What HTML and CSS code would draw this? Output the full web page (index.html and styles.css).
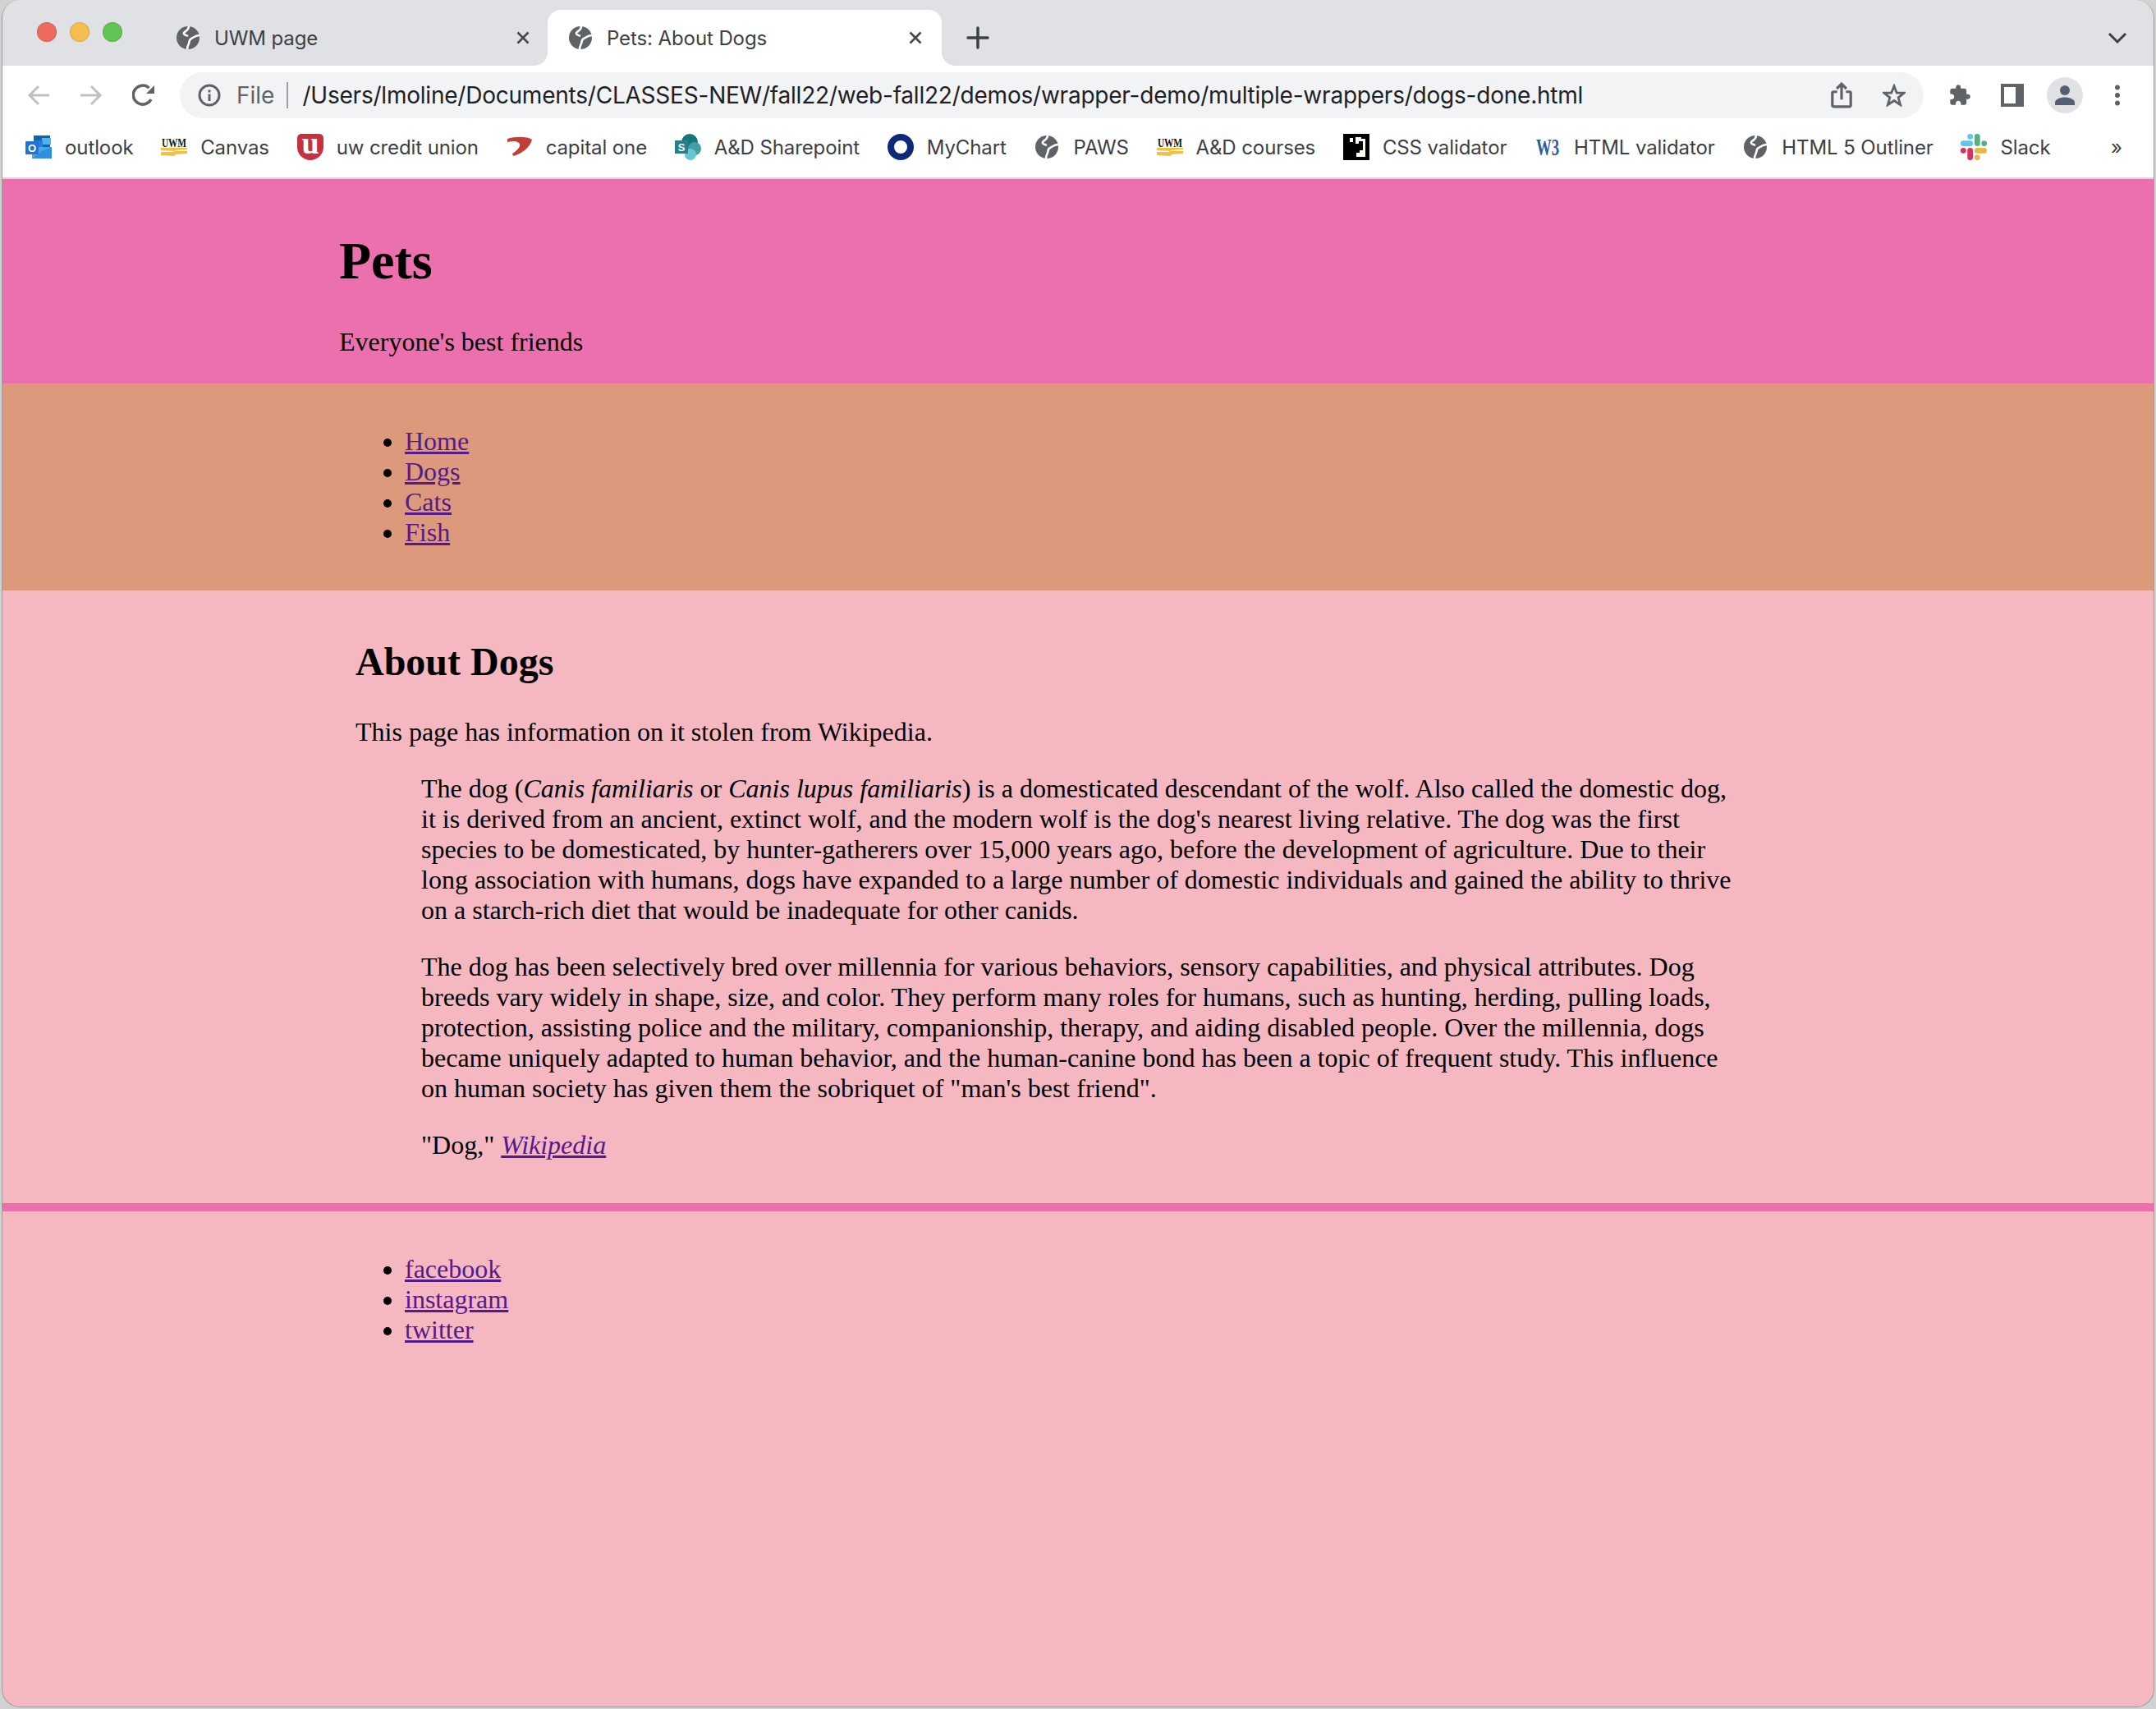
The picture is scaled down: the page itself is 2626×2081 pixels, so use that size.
FILE: index.html
```html
<!DOCTYPE html>
<html lang="en">
<head>
    <meta charset="UTF-8">
    <meta name="viewport" content="width=device-width, initial-scale=1.0">
    <title>Pets: About Dogs</title>
    <link rel="stylesheet" href="styles.css">
</head>
<body>
    <svg class="defs" width="0" height="0">
        <symbol id="globe" viewBox="0 0 28 28">
            <circle cx="14" cy="14" r="14" fill="#5f6368"/>
            <path d="M15 0C15 5 10 6 9 8C8 10 12 11 14 12" fill="none" stroke="#fff" stroke-width="2.600"/>
            <path d="M28 11C23 11 20 14 18 15C15 16 16 19 15 21C14 23 13 25 13 28" fill="none" stroke="#fff" stroke-width="2.600"/>
        </symbol>
        <symbol id="uwm-bars" viewBox="0 0 32 12">
            <path d="M0 1H32V3L18 4L16 5L0 4Z" fill="#f2c144"/>
            <path d="M0 6H14L16 5H32V8L18 9L16 11L0 10Z" fill="#f2c144"/>
        </symbol>
    </svg>

    <div class="window">
        <div class="tabstrip">
            <div class="lights">
                <span class="light red"></span>
                <span class="light yellow"></span>
                <span class="light green"></span>
            </div>
            <div class="tab">
                <svg class="tab-icon"><use href="#globe"/></svg>
                <span class="tab-title">UWM page</span>
                <svg class="tab-close" viewBox="0 0 20 20"><path d="M3.500 3.500L16.500 16.500M16.500 3.500L3.500 16.500"/></svg>
            </div>
            <div class="tab active">
                <svg class="tab-icon"><use href="#globe"/></svg>
                <span class="tab-title">Pets: About Dogs</span>
                <svg class="tab-close" viewBox="0 0 20 20"><path d="M3.500 3.500L16.500 16.500M16.500 3.500L3.500 16.500"/></svg>
            </div>
            <svg class="new-tab" viewBox="0 0 28 28"><path d="M14 2V26M2 14H26"/></svg>
            <svg class="tab-search" viewBox="0 0 28 28"><path d="M4 9L14 19L24 9"/></svg>
        </div>

        <div class="toolbar">
            <span class="tool">
                <svg class="icon" viewBox="0 0 28 28"><path class="line off" d="M27 14H3M14 3L3 14L14 25"/></svg>
            </span>
            <span class="tool">
                <svg class="icon" viewBox="0 0 28 28"><path class="line off" d="M1 14H25M14 3L25 14L14 25"/></svg>
            </span>
            <span class="tool">
                <svg class="icon" viewBox="0 0 28 28">
                    <path class="line" d="M23 19A11.500 11.500 0 1 1 20.500 5"/>
                    <path class="solid" d="M27 2V12H17Z"/>
                </svg>
            </span>
            <div class="omnibox">
                <svg class="icon" viewBox="0 0 28 28">
                    <circle class="line thin" cx="14" cy="14" r="12"/>
                    <path class="solid" d="M12.500 12.500H15.500V21H12.500ZM12.500 7.500H15.500V10.500H12.500Z"/>
                </svg>
                <span class="scheme">File</span>
                <span class="divider"></span>
                <span class="url">/Users/lmoline/Documents/CLASSES-NEW/fall22/web-fall22/demos/wrapper-demo/multiple-wrappers/dogs-done.html</span>
                <span class="tool">
                    <svg class="icon share" viewBox="0 0 24 30">
                        <path class="line thin" d="M7 11H3A1.500 1.500 0 0 0 1.500 12.500V26.500A1.500 1.500 0 0 0 3 28H21A1.500 1.500 0 0 0 22.500 26.500V12.500A1.500 1.500 0 0 0 21 11H17"/>
                        <path class="line thin" d="M12 20V2M6.500 7.500L12 2L17.500 7.500"/>
                    </svg>
                </span>
                <span class="tool">
                    <svg class="icon" viewBox="0 0 30 30"><path class="line thin" d="M15 3L18.500 12H28L20.500 18L23.200 27.500L15 22L6.800 27.500L9.500 18L2 12H11.500Z"/></svg>
                </span>
            </div>
            <span class="tool">
                <svg class="icon" viewBox="0 0 24 24"><path class="solid" d="M20.500 11H19V7c0-1.100-.9-2-2-2h-4V3.500C13 2.120 11.880 1 10.500 1S8 2.120 8 3.500V5H4c-1.100 0-1.990.9-1.990 2v3.800H3.500c1.490 0 2.700 1.210 2.700 2.700s-1.210 2.700-2.700 2.700H2V20c0 1.100.9 2 2 2h3.800v-1.500c0-1.490 1.210-2.700 2.700-2.700 1.490 0 2.700 1.210 2.700 2.700V22H17c1.100 0 2-.9 2-2v-4h1.500c1.380 0 2.500-1.120 2.500-2.500S21.880 11 20.500 11z"/></svg>
            </span>
            <span class="tool">
                <span class="side-panel"></span>
            </span>
            <span class="tool">
                <svg class="avatar" viewBox="0 0 44 44">
                    <circle cx="22" cy="22" r="22" fill="#dfe1e5"/>
                    <circle cx="22" cy="16" r="6" fill="#565e71"/>
                    <path d="M10 34V31C10 27 16 24.500 22 24.500C28 24.500 34 27 34 31V34Z" fill="#565e71"/>
                </svg>
            </span>
            <span class="tool">
                <svg class="icon" viewBox="0 0 28 28">
                    <circle class="solid" cx="14" cy="4.500" r="3"/>
                    <circle class="solid" cx="14" cy="14" r="3"/>
                    <circle class="solid" cx="14" cy="23.500" r="3"/>
                </svg>
            </span>
        </div>

        <div class="bookmarks">
            <a class="bookmark">
                <svg class="fav" viewBox="0 0 32 32">
                    <rect x="10" y="2" width="20" height="14" fill="#0f63b5"/>
                    <rect x="20" y="5" width="11" height="8" fill="#50b4f0"/>
                    <rect x="10" y="8" width="11" height="8" fill="#2b7cd3"/>
                    <path d="M8 16L32 16V30H8Z" fill="#4ca5e6"/>
                    <path d="M8 30L20 21L32 16V17L32 30Z" fill="#2e8ee0"/>
                    <rect x="0" y="9" width="16" height="16" rx="1" fill="#2272cf"/>
                    <text x="8" y="21.500" class="logo-sans" font-size="13" text-anchor="middle" fill="#fff">O</text>
                </svg>
                outlook
            </a>
            <a class="bookmark">
                <svg class="fav" viewBox="0 0 32 32">
                    <text x="1" y="16" class="uwm-text" textLength="30" lengthAdjust="spacingAndGlyphs">UWM</text>
                    <use href="#uwm-bars" y="16" width="32" height="12"/>
                </svg>
                Canvas
            </a>
            <a class="bookmark">
                <svg class="fav" viewBox="0 0 32 32">
                    <path d="M5 0H27A5 5 0 0 1 32 5V16A16 16 0 0 1 0 16V5A5 5 0 0 1 5 0Z" fill="#c7303e"/>
                    <text x="16" y="24" class="logo-serif" font-size="38" text-anchor="middle" fill="#fff">u</text>
                </svg>
                uw credit union
            </a>
            <a class="bookmark">
                <svg class="fav" viewBox="0 0 32 32">
                    <path d="M1 6C11 3 25 3 31 7C29 16 19 24 8 27L7 24C15 19 18 14 15 11C11 8 6 9 1 10Z" fill="#c43d36"/>
                </svg>
                capital one
            </a>
            <a class="bookmark">
                <svg class="fav" viewBox="0 0 32 32">
                    <circle cx="18" cy="10" r="10" fill="#17767a"/>
                    <circle cx="24" cy="18" r="8" fill="#459ea3"/>
                    <circle cx="19" cy="25" r="7" fill="#68c6d2"/>
                    <rect x="0" y="8" width="16" height="16" fill="#2a8087"/>
                    <text x="8" y="21" class="logo-sans" font-size="13" text-anchor="middle" fill="#fff">S</text>
                </svg>
                A&amp;D Sharepoint
            </a>
            <a class="bookmark">
                <svg class="fav" viewBox="0 0 32 32"><circle cx="16" cy="16" r="12" fill="#fff" stroke="#0d2a7a" stroke-width="8"/></svg>
                MyChart
            </a>
            <a class="bookmark">
                <span class="fav-box"><svg class="fav-globe"><use href="#globe"/></svg></span>
                PAWS
            </a>
            <a class="bookmark">
                <svg class="fav" viewBox="0 0 32 32">
                    <text x="1" y="16" class="uwm-text" textLength="30" lengthAdjust="spacingAndGlyphs">UWM</text>
                    <use href="#uwm-bars" y="16" width="32" height="12"/>
                </svg>
                A&amp;D courses
            </a>
            <a class="bookmark">
                <svg class="fav" viewBox="0 0 32 32">
                    <rect width="32" height="32" fill="#000"/>
                    <path d="M8 5H12V10H8ZM15 4H22V6H27V20H24V9H19V12H15ZM16 23H20V20H27V28H16Z" fill="#fffdf0"/>
                </svg>
                CSS validator
            </a>
            <a class="bookmark">
                <svg class="fav" viewBox="0 0 32 32">
                    <text x="16" y="26" class="logo-w3" font-size="30" text-anchor="middle" textLength="28" lengthAdjust="spacingAndGlyphs">W3</text>
                </svg>
                HTML validator
            </a>
            <a class="bookmark">
                <span class="fav-box"><svg class="fav-globe"><use href="#globe"/></svg></span>
                HTML 5 Outliner
            </a>
            <a class="bookmark">
                <svg class="fav" viewBox="0 0 32 32">
                    <rect x="0" y="8.300" width="15" height="6.700" rx="3.300" fill="#5fc6ee"/>
                    <rect x="8.300" y="0" width="6.700" height="6.700" rx="3.300" fill="#5fc6ee"/>
                    <rect x="17" y="0" width="6.700" height="15" rx="3.300" fill="#4cb582"/>
                    <rect x="25.300" y="8.300" width="6.700" height="6.700" rx="3.300" fill="#4cb582"/>
                    <rect x="17" y="17" width="15" height="6.700" rx="3.300" fill="#e9b64a"/>
                    <rect x="17" y="25.300" width="6.700" height="6.700" rx="3.300" fill="#e9b64a"/>
                    <rect x="8.300" y="17" width="6.700" height="15" rx="3.300" fill="#dc2f5c"/>
                    <rect x="0" y="17" width="6.700" height="6.700" rx="3.300" fill="#dc2f5c"/>
                </svg>
                Slack
            </a>
            <span class="more">»</span>
        </div>

        <header class="band site-header">
            <div class="wrapper">
                <h1>Pets</h1>
                <p>Everyone's best friends</p>
            </div>
        </header>

        <nav class="band site-nav">
            <div class="wrapper">
                <ul>
                    <li><a href="#home">Home</a></li>
                    <li><a href="#dogs">Dogs</a></li>
                    <li><a href="#cats">Cats</a></li>
                    <li><a href="#fish">Fish</a></li>
                </ul>
            </div>
        </nav>

        <main class="band site-main">
            <div class="wrapper">
                <h2>About Dogs</h2>
                <p>This page has information on it stolen from Wikipedia.</p>
                <blockquote>
                    <p>The dog (<em>Canis familiaris</em> or <em>Canis lupus familiaris</em>) is a domesticated descendant of the wolf. Also called the domestic dog, it is derived from an ancient, extinct wolf, and the modern wolf is the dog's nearest living relative. The dog was the first species to be domesticated, by hunter-gatherers over 15,000 years ago, before the development of agriculture. Due to their long association with humans, dogs have expanded to a large number of domestic individuals and gained the ability to thrive on a starch-rich diet that would be inadequate for other canids.</p>
                    <p>The dog has been selectively bred over millennia for various behaviors, sensory capabilities, and physical attributes. Dog breeds vary widely in shape, size, and color. They perform many roles for humans, such as hunting, herding, pulling loads, protection, assisting police and the military, companionship, therapy, and aiding disabled people. Over the millennia, dogs became uniquely adapted to human behavior, and the human-canine bond has been a topic of frequent study. This influence on human society has given them the sobriquet of "man's best friend".</p>
                    <p>"Dog," <a href="#wikipedia"><em>Wikipedia</em></a></p>
                </blockquote>
            </div>
        </main>

        <footer class="band site-footer">
            <div class="wrapper">
                <ul>
                    <li><a href="#facebook">facebook</a></li>
                    <li><a href="#instagram">instagram</a></li>
                    <li><a href="#twitter">twitter</a></li>
                </ul>
            </div>
        </footer>
    </div>
</body>
</html>
```

FILE: styles.css
```css
html, body {
    height: 100%;
}
body {
    margin: 0;
    padding: 0 2px 2px 2px;
    box-sizing: border-box;
    background-color: #d2d2d2;
    font-family: "Liberation Serif", serif;
    font-size: 32px;
    line-height: 37px;
    color: #000;
}
.defs {
    position: absolute;
}
.window {
    display: flex;
    flex-direction: column;
    height: 100%;
    box-sizing: border-box;
    background-color: #f5b7c0;
    border: 1px solid #9c9c9c;
    border-top: none;
    border-radius: 22px;
    overflow: hidden;
}

/* browser chrome */
.tabstrip {
    display: flex;
    align-items: stretch;
    height: 80px;
    box-sizing: border-box;
    padding: 12px 30px 0 42px;
    background-color: #dfe1e5;
    font-family: Inter, sans-serif;
    font-size: 24px;
    letter-spacing: -0.1px;
    color: #3c4043;
}
.lights {
    display: flex;
    gap: 16px;
    margin-top: 15px;
    margin-right: 50px;
}
.light {
    width: 24px;
    height: 24px;
    box-sizing: border-box;
    border-radius: 50%;
    border: 1px solid rgba(0, 0, 0, 0.12);
}
.light.red {
    background-color: #ee6a5f;
}
.light.yellow {
    background-color: #f6be4f;
}
.light.green {
    background-color: #61c454;
}
.tab {
    display: flex;
    align-items: center;
    width: 468px;
    box-sizing: border-box;
    padding: 0 20px 0 16px;
}
.tab.active {
    position: relative;
    width: 480px;
    padding: 0 22px 0 26px;
    background-color: #fff;
    border-radius: 16px 16px 0 0;
}
.tab.active::before,
.tab.active::after {
    content: "";
    position: absolute;
    bottom: 0;
    width: 16px;
    height: 16px;
}
.tab.active::before {
    left: -16px;
    background: radial-gradient(circle at 0 0, #dfe1e5 15.500px, #fff 16px);
}
.tab.active::after {
    right: -16px;
    background: radial-gradient(circle at 100% 0, #dfe1e5 15.500px, #fff 16px);
}
.tab-icon {
    width: 28px;
    height: 28px;
    margin-right: 18px;
    flex-shrink: 0;
}
.tab-title {
    flex: 1;
    white-space: nowrap;
}
.tab-close {
    width: 20px;
    height: 20px;
    fill: none;
    stroke: #45494d;
    stroke-width: 2.600;
}
.new-tab {
    align-self: center;
    width: 28px;
    height: 28px;
    margin-left: 30px;
    fill: none;
    stroke: #3c4043;
    stroke-width: 3.500;
    stroke-linecap: round;
}
.tab-search {
    align-self: center;
    width: 28px;
    height: 28px;
    margin-left: auto;
    fill: none;
    stroke: #3c4043;
    stroke-width: 3;
}
.toolbar {
    display: flex;
    align-items: center;
    height: 72px;
    box-sizing: border-box;
    padding: 0 12px;
    background-color: #fff;
    font-family: Inter, sans-serif;
}
.tool {
    display: flex;
    align-items: center;
    justify-content: center;
    width: 64px;
    flex-shrink: 0;
}
.icon {
    width: 28px;
    height: 28px;
}
.icon.share {
    height: 32px;
}
.line {
    fill: none;
    stroke: #5f6368;
    stroke-width: 3.500;
}
.line.off {
    stroke: #bdc1c6;
    stroke-width: 3;
}
.line.thin {
    stroke-width: 3;
}
.solid {
    fill: #5f6368;
}
.side-panel {
    width: 14px;
    height: 20px;
    border: 4px solid #5f6368;
    border-right-width: 10px;
}
.avatar {
    width: 44px;
    height: 44px;
}
.omnibox {
    flex: 1;
    display: flex;
    align-items: center;
    height: 56px;
    margin: 0 12px;
    padding: 0 4px 0 22px;
    background-color: #f1f3f4;
    border-radius: 28px;
    font-size: 28px;
    white-space: nowrap;
}
.scheme {
    margin-left: 19px;
    color: #5f6368;
}
.divider {
    width: 2px;
    height: 32px;
    margin: 0 17px 0 15px;
    background-color: #9aa0a6;
}
.url {
    flex: 1;
    letter-spacing: -0.22px;
    color: #202124;
}
.bookmarks {
    display: flex;
    align-items: center;
    gap: 33.700px;
    height: 66px;
    box-sizing: border-box;
    padding: 0 0 10px 28px;
    background-color: #fff;
    border-bottom: 2px solid #d6d7da;
    font-family: Inter, sans-serif;
    font-size: 24px;
    letter-spacing: -0.1px;
    color: #3c4043;
    white-space: nowrap;
}
.bookmark {
    display: flex;
    align-items: center;
    gap: 16px;
    color: inherit;
}
.fav {
    width: 32px;
    height: 32px;
    overflow: visible;
}
.fav-box {
    display: flex;
    align-items: center;
    justify-content: center;
    width: 32px;
    height: 32px;
}
.fav-globe {
    width: 28px;
    height: 28px;
}
.more {
    margin-left: auto;
    margin-right: 38px;
}
.uwm-text {
    font-family: "Liberation Serif", serif;
    font-weight: bold;
    font-size: 15px;
    fill: #111;
}
.logo-sans {
    font-family: "Liberation Sans", sans-serif;
    font-weight: bold;
}
.logo-serif {
    font-family: "Liberation Serif", serif;
    font-weight: bold;
}
.logo-w3 {
    font-family: "Liberation Serif", serif;
    font-weight: bold;
    fill: #2a5ba3;
}

/* the page itself */
.band {
    flex-shrink: 0;
}
.wrapper {
    max-width: 1800px;
    margin: 0 auto;
    box-sizing: border-box;
}
.site-header {
    background-color: #ed70ae;
}
.site-header .wrapper {
    padding-top: 20px;
    display: flow-root;
}
.site-nav {
    background-color: #dc997c;
}
.site-nav .wrapper,
.site-footer .wrapper {
    padding: 20px 0;
}
.site-main {
    border-bottom: 10px solid #ed70ae;
}
.site-main .wrapper {
    padding: 19px 20px 20px;
}
h1 {
    font-size: 64px;
    line-height: 74px;
    margin: 43px 0;
}
h2 {
    font-size: 48px;
    line-height: 55px;
    margin: 40px 0;
}
p {
    margin: 32px 0;
}
ul {
    margin: 32px 0;
    padding-left: 80px;
}
blockquote {
    margin: 32px 80px;
}
a {
    color: #551a8b;
    text-decoration-thickness: 3px;
}
```
